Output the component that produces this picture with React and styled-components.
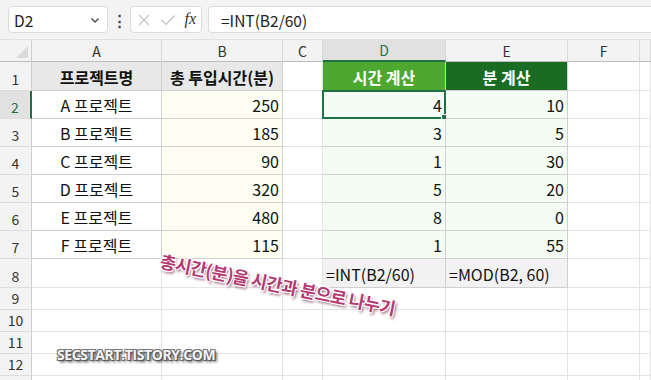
import React from "react";
import styled, { createGlobalStyle } from "styled-components";

const GlobalStyle = createGlobalStyle`
  html, body {
    margin: 0;
    padding: 0;
    background: #ffffff;
    overflow: hidden;
  }
  body {
    font-family: "Noto Sans CJK KR", "Noto Sans", sans-serif;
  }
`;

const Page = styled.div`
  width: 651px;
  height: 380px;
  position: relative;
  overflow: hidden;
  background: #ffffff;
`;

const Toolbar = styled.div`
  height: 40px;
  box-sizing: border-box;
  background: #f3f3f3;
  border-bottom: 1px solid #e0e0e0;
  display: flex;
  align-items: center;
  padding: 0 0 0 8px;
`;

const NameBox = styled.div`
  width: 100px;
  height: 27px;
  box-sizing: border-box;
  background: #ffffff;
  border: 1px solid #dcdcdc;
  border-radius: 4px;
  display: flex;
  align-items: center;
  justify-content: space-between;
  padding: 0 6px 0 5px;
  font-size: 15.5px;
  color: #222;
`;

const Dots = styled.div`
  width: 22px;
  display: flex;
  justify-content: center;
  color: #444;
  font-size: 15px;
  font-weight: 700;
`;

const FxBox = styled.div`
  width: 72px;
  height: 27px;
  box-sizing: border-box;
  background: #ffffff;
  border: 1px solid #dcdcdc;
  border-radius: 4px;
  display: flex;
  align-items: center;
  justify-content: space-between;
  padding: 0 5px 0 6px;
`;

const FxLabel = styled.span`
  font-family: "Liberation Serif", serif;
  font-style: italic;
  font-size: 16px;
  color: #333;
  margin-top: -2px;
`;

const FormulaBox = styled.div`
  flex: 1;
  margin-left: 6px;
  height: 27px;
  box-sizing: border-box;
  background: #ffffff;
  border: 1px solid #dcdcdc;
  border-right: none;
  border-radius: 4px 0 0 4px;
  display: flex;
  align-items: center;
  padding-left: 12px;
  font-size: 15.5px;
  color: #222;
`;

const Sheet = styled.div`
  display: grid;
  grid-template-columns: 32px 130px 121px 40px 123px 122px 72px 11px;
  grid-template-rows: 22px 29px repeat(6, 28px) 29px repeat(4, 22px) 22px;
`;

const Corner = styled.div`
  background: #f3f3f3;
  border-right: 1px solid #cfcfcf;
  border-bottom: 1px solid #bdbdbd;
  box-sizing: border-box;
  position: relative;
  &::after {
    content: "";
    position: absolute;
    right: 3px;
    bottom: 3px;
    width: 0;
    height: 0;
    border-left: 12px solid transparent;
    border-bottom: 12px solid #dadada;
  }
`;

const ColHead = styled.div`
  box-sizing: border-box;
  background: ${(p) => (p.$active ? "#e1e1e1" : "#f3f3f3")};
  border-right: 1px solid #d8d8d8;
  border-bottom: ${(p) => (p.$active ? "2px solid #1e7145" : "1px solid #bdbdbd")};
  display: flex;
  align-items: center;
  justify-content: center;
  font-size: 14px;
  color: ${(p) => (p.$active ? "#1e7145" : "#333")};
`;

const RowHead = styled.div`
  box-sizing: border-box;
  background: ${(p) => (p.$active ? "#e1e1e1" : "#f3f3f3")};
  border-right: ${(p) => (p.$active ? "2px solid #1e7145" : "1px solid #cfcfcf")};
  border-bottom: 1px solid #dcdcdc;
  display: flex;
  align-items: flex-end;
  justify-content: center;
  padding-bottom: 1px;
  font-size: 14px;
  color: ${(p) => (p.$active ? "#1e7145" : "#333")};
`;

const bgFor = (kind) =>
  ({
    head: "#e8e8e8",
    yellow: "#fefef2",
    green: "#f5fcf3",
    hdrLight: "#4ea72e",
    hdrDark: "#1a6b24",
    gray: "#f2f2f2",
  }[kind] || "#ffffff");

const Cell = styled.div`
  box-sizing: border-box;
  background: ${(p) => bgFor(p.$kind)};
  border-right: 1px solid ${(p) => (p.$kind ? "#d0d0d0" : "#e4e4e4")};
  border-bottom: 1px solid ${(p) => (p.$kind ? "#d0d0d0" : "#e4e4e4")};
  display: flex;
  align-items: flex-end;
  justify-content: ${(p) =>
    p.$align === "right" ? "flex-end" : p.$align === "left" ? "flex-start" : "center"};
  padding: 0 3px 1px 3px;
  font-size: 16px;
  font-weight: ${(p) => (p.$bold ? 700 : 400)};
  color: ${(p) => (p.$kind === "hdrLight" || p.$kind === "hdrDark" ? "#ffffff" : "#111")};
  white-space: nowrap;
  position: relative;
`;

const Selection = styled.div`
  position: absolute;
  left: -1px;
  top: -1px;
  right: -1px;
  bottom: -1px;
  border: 2px solid #1e7145;
  pointer-events: none;
  &::after {
    content: "";
    position: absolute;
    right: -5px;
    bottom: -5px;
    width: 6px;
    height: 6px;
    background: #1e7145;
    border: 1px solid #fff;
  }
`;

const Caption = styled.div`
  position: absolute;
  left: 163px;
  top: 248px;
  transform: rotate(11.5deg);
  transform-origin: left top;
  font-size: 17.5px;
  font-weight: 700;
  letter-spacing: -0.6px;
  color: #b43a74;
  white-space: nowrap;
  text-shadow: -1px -1px 0 #fff, 1px -1px 0 #fff, -1px 1px 0 #fff, 1px 1px 0 #fff,
    0 0 2px #fff, 2px 2px 3px rgba(80, 0, 40, 0.75);
`;

const Watermark = styled.div`
  position: absolute;
  left: 57px;
  top: 345px;
  font-family: "Open Sans", "Liberation Sans", sans-serif;
  font-size: 14px;
  font-weight: 700;
  letter-spacing: -0.4px;
  color: #f4f4f4;
  white-space: nowrap;
  text-shadow: 1px 1px 0 #555, -1px -1px 0 #777, 1px -1px 0 #777, -1px 1px 0 #777,
    2px 2px 3px rgba(0, 0, 0, 0.8);
`;

const ChevronIcon = () => (
  <svg width="12" height="12" viewBox="0 0 12 12">
    <path d="M2.5 4.5 L6 8 L9.5 4.5" fill="none" stroke="#444" strokeWidth="1.3" />
  </svg>
);

const CancelIcon = () => (
  <svg width="14" height="14" viewBox="0 0 14 14">
    <path d="M2 2 L12 12 M12 2 L2 12" stroke="#c4c4c4" strokeWidth="1.2" />
  </svg>
);

const CheckIcon = () => (
  <svg width="16" height="14" viewBox="0 0 16 14">
    <path d="M1.5 7 L6 11.5 L14.5 2.5" fill="none" stroke="#c4c4c4" strokeWidth="1.2" />
  </svg>
);

const projects = [
  ["A 프로젝트", 250],
  ["B 프로젝트", 185],
  ["C 프로젝트", 90],
  ["D 프로젝트", 320],
  ["E 프로젝트", 480],
  ["F 프로젝트", 115],
];

const cols = ["A", "B", "C", "D", "E", "F", ""];

const App = () => {
  const rows = [];

  rows.push(<Corner key="corner" />);
  cols.forEach((c, i) =>
    rows.push(
      <ColHead key={"h" + i} $active={c === "D"}>
        {c}
      </ColHead>
    )
  );

  // row 1
  rows.push(<RowHead key="r1">1</RowHead>);
  rows.push(
    <Cell key="a1" $kind="head" $bold>
      프로젝트명
    </Cell>
  );
  rows.push(
    <Cell key="b1" $kind="head" $bold>
      총 투입시간(분)
    </Cell>
  );
  rows.push(<Cell key="c1" />);
  rows.push(
    <Cell key="d1" $kind="hdrLight" $bold>
      시간 계산
    </Cell>
  );
  rows.push(
    <Cell key="e1" $kind="hdrDark" $bold>
      분 계산
    </Cell>
  );
  rows.push(<Cell key="f1" />);
  rows.push(<Cell key="g1" />);

  projects.forEach(([name, mins], i) => {
    const r = i + 2;
    rows.push(
      <RowHead key={"r" + r} $active={r === 2}>
        {r}
      </RowHead>
    );
    rows.push(
      <Cell key={"a" + r} $kind="plain">
        {name}
      </Cell>
    );
    rows.push(
      <Cell key={"b" + r} $kind="yellow" $align="right">
        {mins}
      </Cell>
    );
    rows.push(<Cell key={"c" + r} />);
    rows.push(
      <Cell key={"d" + r} $kind="green" $align="right">
        {Math.floor(mins / 60)}
        {r === 2 && <Selection />}
      </Cell>
    );
    rows.push(
      <Cell key={"e" + r} $kind="green" $align="right">
        {mins % 60}
      </Cell>
    );
    rows.push(<Cell key={"f" + r} />);
    rows.push(<Cell key={"g" + r} />);
  });

  // row 8
  rows.push(<RowHead key="r8">8</RowHead>);
  rows.push(<Cell key="a8" />);
  rows.push(<Cell key="b8" />);
  rows.push(<Cell key="c8" />);
  rows.push(
    <Cell key="d8" $kind="gray" $align="left">
      =INT(B2/60)
    </Cell>
  );
  rows.push(
    <Cell key="e8" $kind="gray" $align="left">
      =MOD(B2, 60)
    </Cell>
  );
  rows.push(<Cell key="f8" />);
  rows.push(<Cell key="g8" />);

  [9, 10, 11, 12, 13].forEach((r) => {
    rows.push(<RowHead key={"r" + r}>{r === 13 ? "" : r}</RowHead>);
    for (let i = 0; i < 7; i++) rows.push(<Cell key={r + "-" + i} />);
  });

  return (
    <Page>
      <GlobalStyle />
      <Toolbar>
        <NameBox>
          <span>D2</span>
          <ChevronIcon />
        </NameBox>
        <Dots>⋮</Dots>
        <FxBox>
          <CancelIcon />
          <CheckIcon />
          <FxLabel>fx</FxLabel>
        </FxBox>
        <FormulaBox>=INT(B2/60)</FormulaBox>
      </Toolbar>
      <Sheet>{rows}</Sheet>
      <Caption>총시간(분)을 시간과 분으로 나누기</Caption>
      <Watermark>SECSTART.TISTORY.COM</Watermark>
    </Page>
  );
};

export default App;
